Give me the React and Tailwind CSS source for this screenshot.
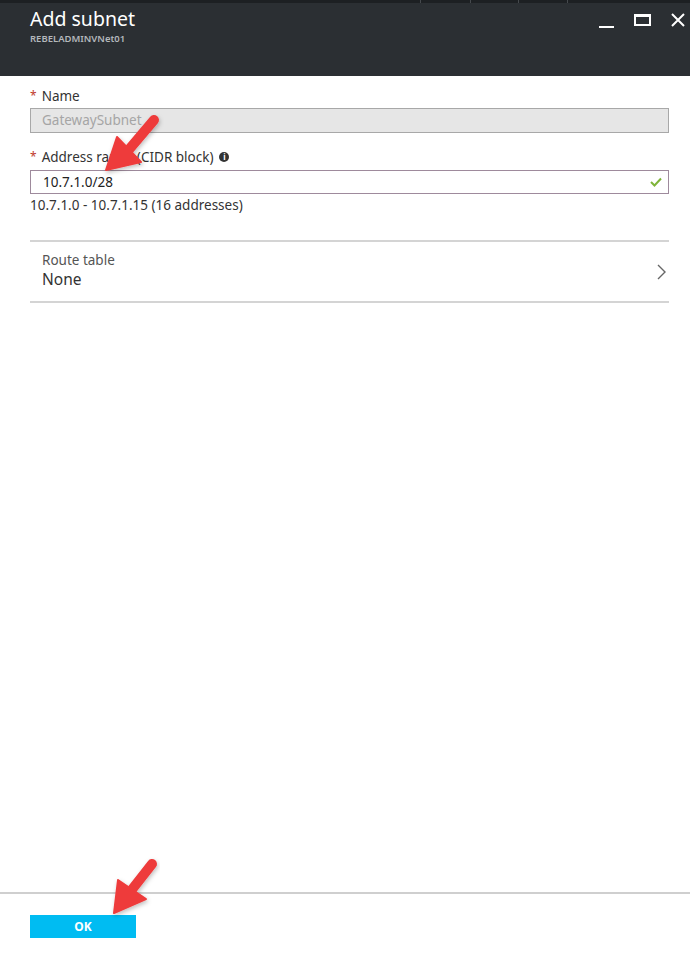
import React from "react";

const font = { fontFamily: '"Noto Sans", "Open Sans", sans-serif' };

const Arrow = ({ className, tail, base1, base2, tip }) => (
  <svg className={className} width="690" height="958" viewBox="0 0 690 958">
    <defs>
      <filter id="arrowShadow" x="-20%" y="-20%" width="140%" height="140%">
        <feDropShadow dx="1" dy="2" stdDeviation="2" floodColor="#000" floodOpacity="0.25" />
      </filter>
    </defs>
    <g filter="url(#arrowShadow)" fill="#ee3b3b" stroke="#ee3b3b">
      <line x1={tail[0]} y1={tail[1]} x2={(base1[0] + base2[0]) / 2} y2={(base1[1] + base2[1]) / 2} strokeWidth="10" strokeLinecap="round" />
      <polygon points={`${base1.join(",")} ${base2.join(",")} ${tip.join(",")}`} strokeWidth="2" strokeLinejoin="round" />
    </g>
  </svg>
);

const Required = ({ children, info }) => (
  <div className="flex items-center h-[16px] text-[13.5px] text-[#333]">
    <span className="text-[#c0392b] text-[12px] mr-[5px] leading-none">*</span>
    {children}
    {info && (
      <span className="ml-[6px] w-[10px] h-[10px] rounded-full bg-[#333] text-white text-[8px] font-bold flex items-center justify-center leading-none">
        i
      </span>
    )}
  </div>
);

export default function App() {
  return (
    <div className="relative w-[690px] h-[958px] bg-white flex flex-col overflow-hidden" style={font}>
      {/* header */}
      <div className="h-[76px] bg-[#2b2f33] flex flex-col">
        <div className="h-[3px] bg-[#1d2023] flex justify-end">
          <div className="w-[270px] flex">
            <div className="w-[50px] border-l border-[#45494d]" />
            <div className="w-[48px] border-l border-[#45494d]" />
            <div className="w-[49px] border-l border-[#45494d]" />
            <div className="flex-1 border-l border-[#45494d]" />
          </div>
        </div>
        <div className="flex justify-between pl-[30px] pr-[5px]">
          <div className="pt-[3px]">
            <div className="text-[19.5px] text-white leading-[26px]">Add subnet</div>
            <div className="text-[9.5px] font-semibold text-[#b4b8bc] leading-[12px] mt-[1px]">REBELADMINVNet01</div>
          </div>
          <div className="flex items-start pt-[11px] gap-[20px]">
            <div className="w-[15px] h-[14px] flex items-end">
              <div className="w-[15px] h-[2px] bg-white" />
            </div>
            <div className="w-[17px] h-[12px] border-2 border-t-[3px] border-white" />
            <svg width="14" height="14" viewBox="0 0 14 14" className="mt-[-1px]">
              <path d="M1 1 L13 13 M13 1 L1 13" stroke="white" strokeWidth="2" />
            </svg>
          </div>
        </div>
      </div>

      {/* body */}
      <div className="pl-[30px] pr-[21px] pt-[12px] flex flex-col text-[#333]">
        <Required>Name</Required>
        <div className="mt-[4px] h-[25px] bg-[#e6e6e6] border border-[#a8a8a8] flex items-center pl-[11px] text-[13.5px] text-[#a5a5a5]">
          GatewaySubnet
        </div>

        <div className="mt-[16px]">
          <Required info>Address range (CIDR block)</Required>
        </div>
        <div className="mt-[5px] h-[24px] border border-[#9e8a9c] flex items-center justify-between pl-[12px] pr-[6px] text-[13.5px] text-[#222]">
          <span>10.7.1.0/28</span>
          <svg width="12" height="10" viewBox="0 0 12 10">
            <path d="M1 5 L4.5 8.5 L11 1.5" fill="none" stroke="#7fb439" strokeWidth="2" />
          </svg>
        </div>
        <div className="mt-[3px] text-[13.5px] leading-[16px] text-[#333]">10.7.1.0 - 10.7.1.15 (16 addresses)</div>

        <div className="mt-[27px] border-t-2 border-b-2 border-[#d4d4d4] h-[63px] flex items-center justify-between pl-[12px] pr-[3px]">
          <div className="flex flex-col mt-[-2px]">
            <span className="text-[13.5px] leading-[16px] text-[#555]">Route table</span>
            <span className="text-[15.5px] leading-[20px] mt-[1px] text-[#333]">None</span>
          </div>
          <svg width="9" height="16" viewBox="0 0 9 16">
            <path d="M1 1 L8 8 L1 15" fill="none" stroke="#666" strokeWidth="1.4" />
          </svg>
        </div>
      </div>

      <div className="flex-1" />

      {/* footer */}
      <div className="border-t-2 border-[#cfcfcf] pl-[30px] pt-[21px] pb-[20px]">
        <button className="w-[106px] h-[23px] bg-[#00bcf2] text-white text-[12px] font-bold flex items-center justify-center">
          OK
        </button>
      </div>

      {/* annotation arrows */}
      <Arrow className="absolute left-0 top-0 pointer-events-none" tail={[154, 120]} base1={[117, 137]} base2={[141, 162]} tip={[106, 170]} />
      <Arrow className="absolute left-0 top-0 pointer-events-none" tail={[152, 864]} base1={[118, 880]} base2={[146, 899]} tip={[114, 913]} />
    </div>
  );
}
